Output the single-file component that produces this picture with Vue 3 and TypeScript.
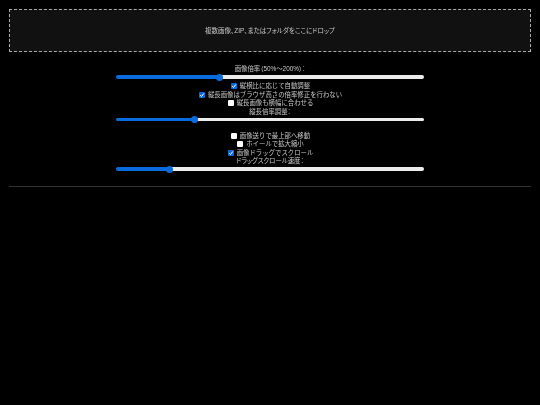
<script setup lang="ts">
import { ref } from 'vue'

const scale = ref(33.3)
const autoFit = ref(true)
const noFix = ref(true)
const fitWidth = ref(false)
const tallScale = ref(25)
const toTop = ref(false)
const wheel = ref(false)
const drag = ref(true)
const speed = ref(16.6)

function fill(v: number): string {
  return `--p:${3.5 + (v / 100) * 301}px`
}
</script>

<template>
  <div class="page">
    <div class="drop">複数画像、ZIP、またはフォルダをここにドロップ</div>

    <section class="group first">
      <label class="line caption">画像倍率（50%〜200%）：</label>
      <input v-model.number="scale" class="slider" type="range" min="0" max="100" step="0.1" :style="fill(scale)" />
      <label class="line check"><input v-model="autoFit" type="checkbox" />縦横比に応じて自動調整</label>
      <label class="line check"><input v-model="noFix" type="checkbox" />縦長画像はブラウザ高さの倍率修正を行わない</label>
      <label class="line check"><input v-model="fitWidth" type="checkbox" />縦長画像も横幅に合わせる</label>
      <label class="line caption">縦長倍率調整：</label>
      <input v-model.number="tallScale" class="slider" type="range" min="0" max="100" step="0.1" :style="fill(tallScale)" />
    </section>

    <section class="group second">
      <label class="line check"><input v-model="toTop" type="checkbox" />画像送りで最上部へ移動</label>
      <label class="line check"><input v-model="wheel" type="checkbox" />ホイールで拡大縮小</label>
      <label class="line check"><input v-model="drag" type="checkbox" />画像ドラッグでスクロール</label>
      <label class="line caption">ドラッグスクロール速度：</label>
      <input v-model.number="speed" class="slider" type="range" min="0" max="100" step="0.1" :style="fill(speed)" />
    </section>

    <hr class="rule" />
  </div>
</template>

<style>
html,
body {
  margin: 0;
  background: #000;
}
</style>

<style scoped>
.page {
  width: 540px;
  height: 405px;
  box-sizing: border-box;
  padding: 9px 9px 0;
  background: #000;
  color: #c8c8c8;
  font-family: "Liberation Sans", "Noto Sans CJK JP", sans-serif;
  font-size: 6.4px;
  overflow: hidden;
  filter: blur(0.3px);
}

.drop {
  height: 43px;
  box-sizing: border-box;
  padding-bottom: 1.5px;
  display: flex;
  align-items: center;
  justify-content: center;
  border: 1px dashed #aaa;
  background: #111;
  font-size: 6.5px;
  font-feature-settings: "palt";
}

.group {
  display: flex;
  flex-direction: column;
  align-items: center;
}

.first {
  margin-top: 13px;
}

.second {
  margin-top: 7px;
}

.line {
  height: 8.5px;
  line-height: 8.5px;
  display: flex;
  align-items: center;
  white-space: nowrap;
}

.caption {
  font-feature-settings: "palt";
}

.check {
  padding-left: 1px;
}

.check input {
  -webkit-appearance: none;
  appearance: none;
  width: 6px;
  height: 6px;
  margin: 0 3px 0 0;
  border-radius: 1px;
  background: #fff;
}

.check input:checked {
  background: #0b6bdc url("data:image/svg+xml,%3Csvg xmlns='http://www.w3.org/2000/svg' viewBox='0 0 12 12'%3E%3Cpath d='M2.5 6.5 5 9l4.5-6' fill='none' stroke='%23fff' stroke-width='2'/%3E%3C/svg%3E") center / 100% 100% no-repeat;
}

.slider {
  -webkit-appearance: none;
  appearance: none;
  display: block;
  width: 308px;
  height: 7px;
  margin: 0 0 1.5px;
  background: transparent;
}

.slider::-webkit-slider-runnable-track {
  height: 3.2px;
  border-radius: 2px;
  background: linear-gradient(to right, #0b6bdc var(--p), #ececec var(--p));
}

.slider::-webkit-slider-thumb {
  -webkit-appearance: none;
  width: 7px;
  height: 7px;
  margin-top: -1.9px;
  border-radius: 50%;
  background: #0b6bdc;
}

.rule {
  margin: 12px 0 0;
  border: 0;
  border-top: 1px solid #333;
}
</style>
